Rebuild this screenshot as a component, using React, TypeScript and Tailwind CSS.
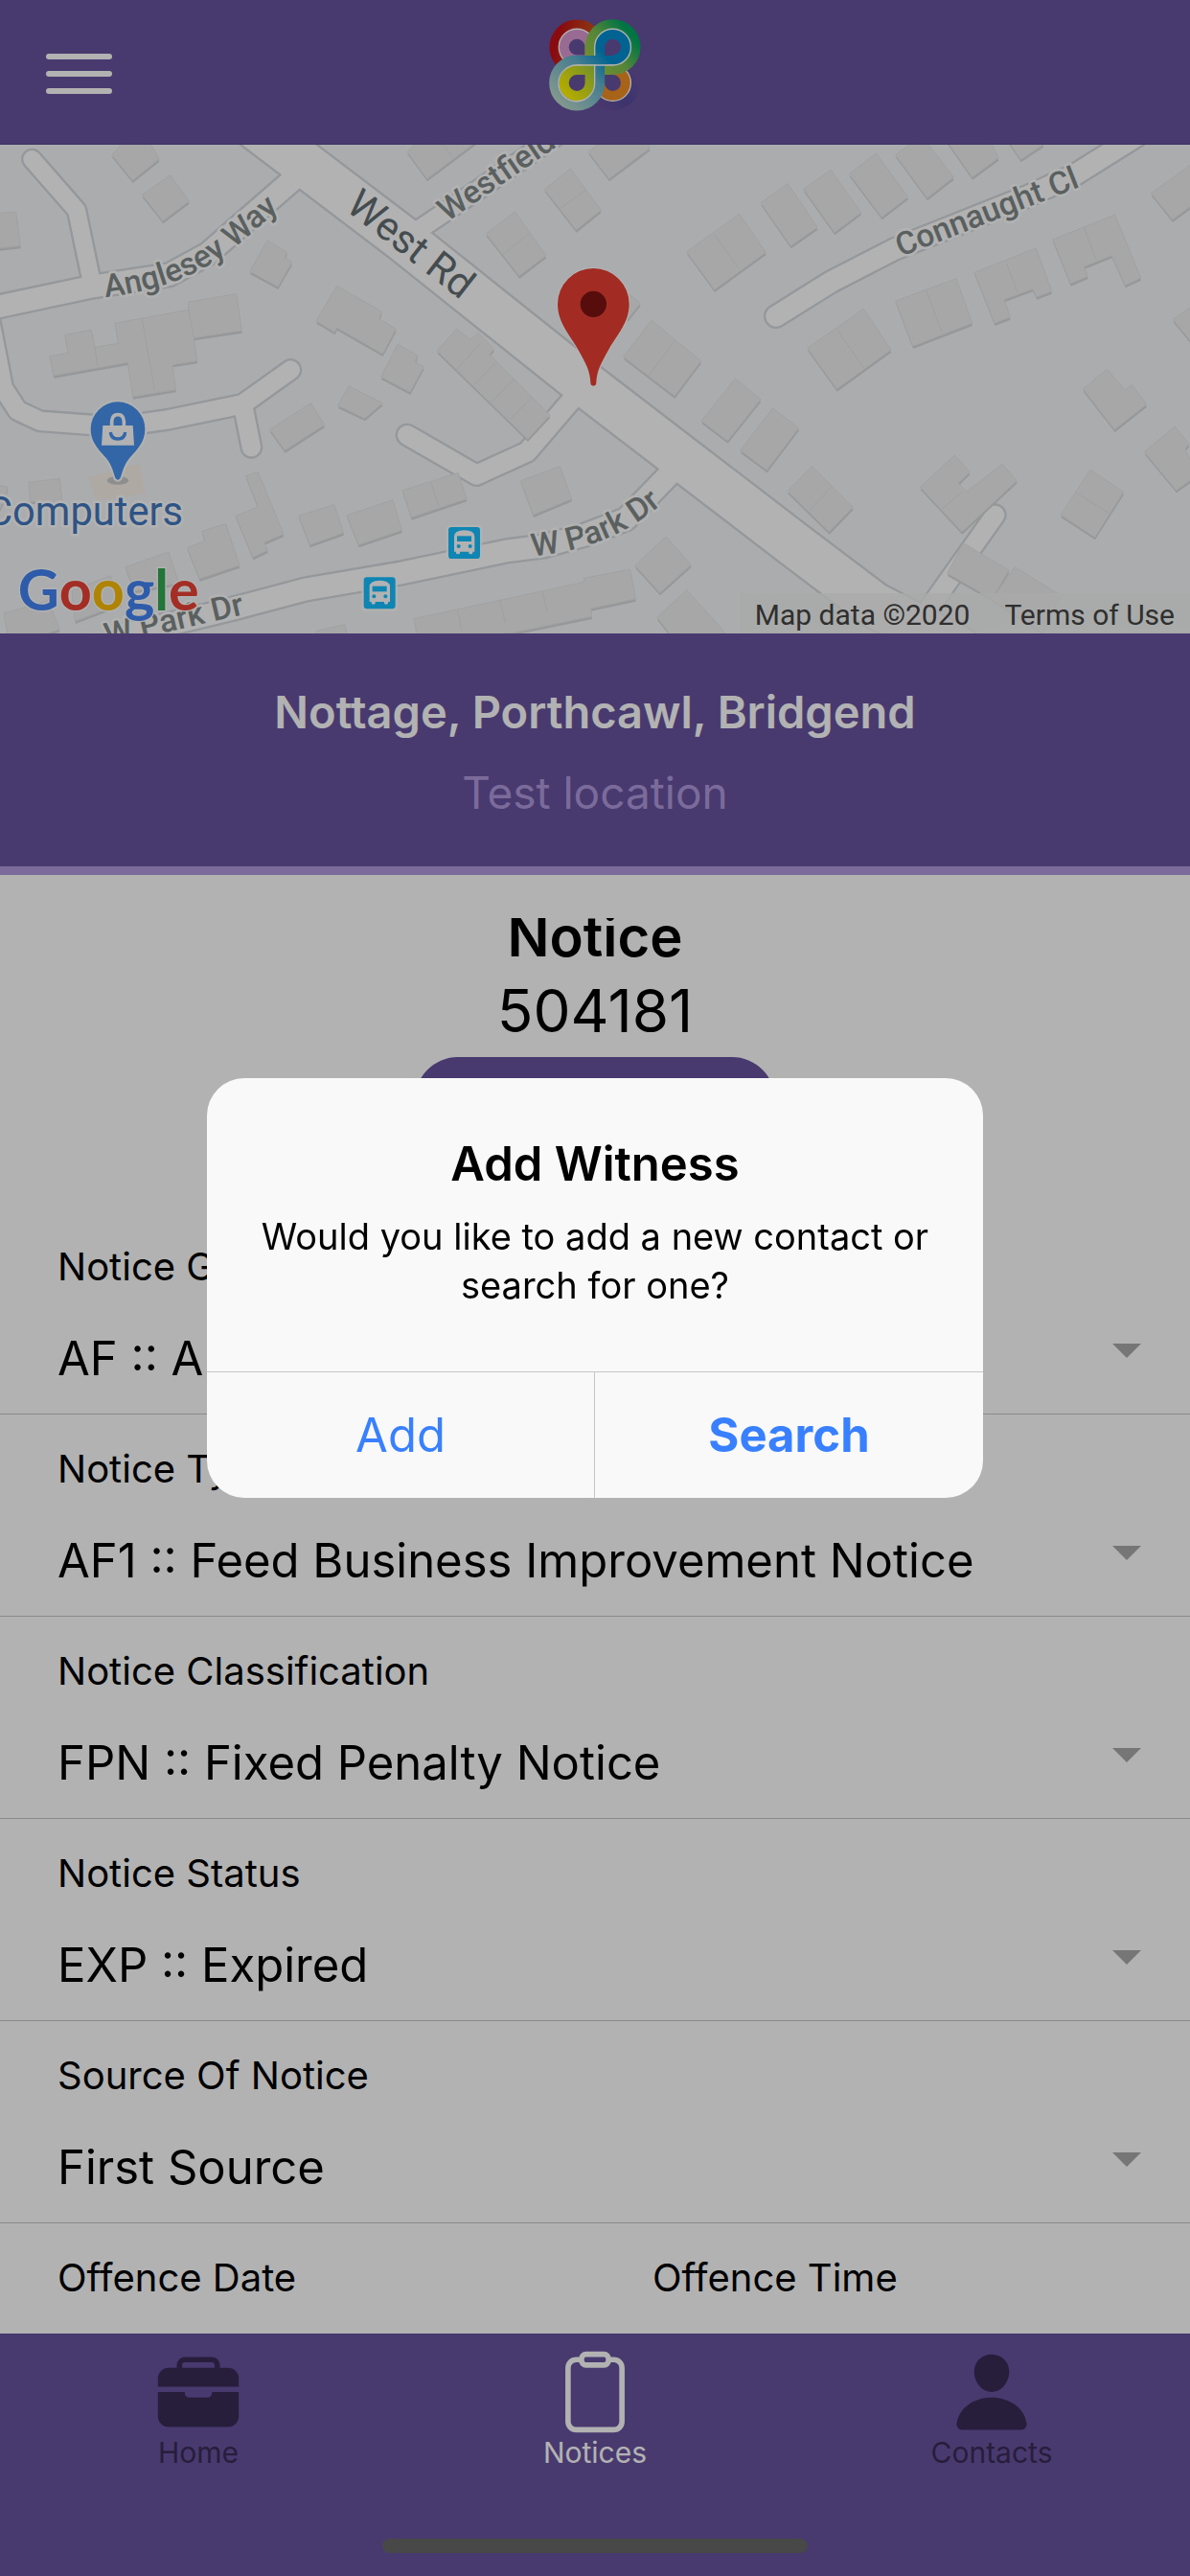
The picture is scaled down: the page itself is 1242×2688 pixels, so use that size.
import { useId } from 'react';
import { IoBriefcase, IoClipboardOutline, IoPerson } from 'react-icons/io5';

const fields = [
  { label: 'Notice Group', value: 'AF :: Animal Feed' },
  { label: 'Notice Type', value: 'AF1 :: Feed Business Improvement Notice' },
  { label: 'Notice Classification', value: 'FPN :: Fixed Penalty Notice' },
  { label: 'Notice Status', value: 'EXP :: Expired' },
  { label: 'Source Of Notice', value: 'First Source' },
];

// width is the road's outer width, the casing takes 7 units on each side
const roads = [
  { d: 'M-20 513 L290 447 L530 410 L650 345 L960 75', width: 82 },
  { d: 'M100 48 L240 208 L290 447', width: 68 },
  { d: 'M-38 520 L10 765 L55 835 L125 868 L365 886 L523 864 L760 815 L910 708', width: 72 },
  { d: 'M760 815 L787 950', width: 72 },
  { d: 'M1280 290 L1500 142 L1750 -30', width: 70 },
  { d: 'M1275 912 L1492 1037 L1650 965 L1830 755', width: 74 },
  { d: 'M380 1540 L720 1458 L957 1395 L1250 1345 L1590 1274 L1700 1260 L1830 1225 L1960 1175 L2130 1000', width: 82 },
  { d: 'M2430 540 L2601 433 L2801 330 L3216 165 L3366 97 L3560 -25', width: 78 },
  { d: 'M3116 1162 L2926 1430 L2850 1540', width: 72 },
  { d: 'M790 -60 L1260 297 L1812 737 L2490 1257 L2736 1443 L3000 1580', width: 152 },
];

const westBuildings = [
  '350,35 400,-20 460,-20 498,48 415,115',
  '445,160 533,98 592,180 510,242',
  '-10,218 50,213 64,320 -10,328',
  '838,302 898,340 893,355 914,372 870,448 782,400',
  '1055,445 1195,525 1188,548 1240,580 1198,658 1055,576 1048,590 990,555',
  '1245,628 1307,662 1300,683 1327,698 1284,778 1193,730',
  '1092,758 1198,812 1142,860 1058,820',
  '845,895 973,812 1016,880 892,960',
  '203,598 286,583 297,637 370,625 360,562 590,520 590,495 740,470 757,585 607,608 617,680 540,692 550,770 416,792 400,685 168,726 156,665 213,655',
  '-10,1068 24,1075 16,1110 -10,1160',
  '90,1060 187,1048 195,1120 95,1120',
  '770,1040 808,1027 888,1222 828,1248 838,1273 792,1295 738,1165 808,1137',
  '632,1213 707,1190 750,1320 625,1362 586,1265 642,1243',
  '935,1165 1046,1130 1076,1218 970,1256',
  '1086,1163 1230,1115 1258,1210 1123,1256',
  '393,1325 528,1278 560,1375 420,1400',
  '225,1400 345,1352 380,1440 235,1495',
  '12,1470 150,1430 187,1520 30,1570',
  '990,1525 1080,1505 1090,1560 995,1560',
];

const centreBuildings = [
  '45,25 100,-30 280,-20 107,110',
  '612,25 690,-30 800,-10 803,15 677,110',
  '475,143 556,78 652,208 574,270',
  '292,282 382,213 480,350 396,414',
  '920,338 1085,220 1168,340 1007,457',
  '1152,185 1237,125 1329,262 1246,320',
  '720,455 775,500 735,550',
  '810,553 965,680 882,790 722,667',
  '1072,735 1152,800 1048,930 966,868',
  '1190,828 1271,890 1171,1022 1088,960',
  '1236,1088 1312,1010 1441,1138 1366,1215',
  '138,648 200,580 243,613 268,593 316,642 303,660 492,850 422,925',
  '30,1085 205,1030 231,1112 58,1170',
  '400,1055 523,1010 560,1112 440,1162',
  '66,1487 600,1372 598,1360 743,1332 760,1425 620,1455 623,1480 380,1530 80,1560',
  '758,1320 855,1230 934,1318 836,1406',
  '827,1483 920,1397 1040,1530 1000,1600 920,1600',
];

const eastBuildings = [
  '50,142 135,82 230,215 147,278',
  '193,95 277,30 377,167 295,230',
  '338,35 420,-25 520,105 437,170',
  '490,-20 630,-20 660,45 578,105',
  '690,-10 800,-20 800,3 730,50',
  '62,640 238,517 324,645 154,768',
  '338,492 528,422 578,562 392,634',
  '585,403 778,327 827,462 780,480 767,455 678,488 697,543 648,562',
  '830,300 1025,222 1106,420 1057,443 1015,350 928,385 940,415 886,438',
  '1138,155 1270,60 1270,190 1205,238',
  '1206,550 1280,500 1280,640',
  '925,768 1000,706 1055,770 1078,755 1124,816 1024,895',
  '1117,965 1212,885 1257,940 1245,955 1280,1040 1217,1085',
  '948,1020 1052,1090 962,1232 855,1162',
  '415,1075 523,975 570,1028 535,1063 560,1090 672,1003 718,1055 546,1215',
  '550,1250 693,1335 640,1425 500,1345',
  '712,1325 852,1412 800,1530 640,1425',
];

// party walls between semi-detached houses
const walls =
  'M445 550 L485 775 M297 637 L305 695 M590 520 L607 608 M1380 -10 L1415 40 M1752 205 L1835 143 M1575 345 L1658 282 M2237 285 L2313 390 M2113 617 L2032 725 M1430 705 L1505 625 M1484 755 L1550 688 M1540 808 L1608 738 M1595 865 L1664 795 M1350 1060 L1372 1132 M1432 1460 L1446 1525 M1566 1430 L1582 1500 M1698 1402 L1714 1465 M2620 580 L2704 702 M2900 460 L2948 588 M3152 375 L3186 465 M3394 262 L3433 365 M2534 1146 L2604 1075 M2948 1145 L3012 1090 M3368 1092 L3472 1156';

function Buildings({ points }: { points: string[] }) {
  return (
    <>
      <g fill="#d6d9db" transform="translate(1 8)">
        {points.map((p) => (
          <polygon key={p} points={p} />
        ))}
      </g>
      <g fill="#f0f0f0" stroke="#e6e7e8" strokeWidth="3">
        {points.map((p) => (
          <polygon key={p} points={p} />
        ))}
      </g>
    </>
  );
}

function BusStop({ x, y }: { x: number; y: number }) {
  return (
    <g transform={`translate(${x} ${y})`}>
      <rect x="-7" y="-7" width="113" height="113" rx="12" fill="#fff" opacity="0.8" />
      <rect width="99" height="99" rx="10" fill="#15bfff" />
      <path
        d="M18 30 Q18 10 50 10 Q82 10 82 30 V77 H76 V81 Q76 85 70 85 Q64 85 64 81 V77 H36 V81 Q36 85 30 85 Q24 85 24 81 V77 H18 Z"
        fill="#fff"
      />
      <rect x="27" y="28" width="45" height="17" fill="#15bfff" />
      <circle cx="32" cy="60" r="6" fill="#15bfff" />
      <circle cx="68" cy="60" r="6" fill="#15bfff" />
    </g>
  );
}

function MapDrawing() {
  return (
    <svg
      viewBox="0 3 3726 1530"
      preserveAspectRatio="xMidYMid slice"
      className="block h-full w-full font-[Roboto,sans-serif]"
      role="img"
      aria-label="Map"
    >
      <defs>
        <path id="anglesey" d="M330 480 C520 458 640 405 765 300 L960 130" />
        <path id="westfield" d="M1400 245 L1800 -30" />
        <path id="westrd" d="M1078 205 L1520 550" />
        <path id="connaught" d="M2820 354 L3440 112" />
        <path id="park" d="M1668 1292 C1830 1272 1960 1237 2130 1078" />
        <path id="park-west" d="M335 1572 L820 1460" />
      </defs>
      <rect y="-20" width="3726" height="1600" fill="#f5f7fa" />

      <g fill="none" strokeLinecap="round" strokeLinejoin="round">
        {roads.map((r) => (
          <path key={r.d} d={r.d} stroke="#d5dadf" strokeWidth={r.width} />
        ))}
        {roads.map((r) => (
          <path key={r.d} d={r.d} stroke="#fff" strokeWidth={r.width - 14} />
        ))}
      </g>

      <Buildings points={westBuildings} />
      <g transform="translate(1230 0)">
        <Buildings points={centreBuildings} />
      </g>
      <g transform="translate(2466 0)">
        <Buildings points={eastBuildings} />
      </g>
      <polygon points="277,1043 435,1003 456,1095 300,1118" fill="#faf2ea" />
      <path d={walls} fill="none" stroke="#e3e4e5" strokeWidth="3" />

      <g fontWeight="500" fontSize="100" fill="#828989" stroke="#fff" strokeWidth="16" strokeLinejoin="round" paintOrder="stroke">
        <text><textPath href="#anglesey">Anglesey Way</textPath></text>
        <text><textPath href="#westfield">Westfield</textPath></text>
        <text><textPath href="#connaught">Connaught Cl</textPath></text>
        <text><textPath href="#park">W Park Dr</textPath></text>
        <text><textPath href="#park-west">W Park Dr</textPath></text>
      </g>
      <text fontSize="126" fill="#636e72" stroke="#fff" strokeWidth="10" paintOrder="stroke">
        <textPath href="#westrd">West Rd</textPath>
      </text>

      <BusStop x={1404} y={1200} />
      <BusStop x={1139} y={1357} />

      {/* Shop pin */}
      <ellipse cx="369" cy="1054" rx="34" ry="13" fill="#ccc" />
      <path
        d="M284 893 A85 85 0 0 1 454 893 C454 935 430 955 405 985 C385 1010 384 1030 376 1048 Q369 1056 362 1048 C354 1030 353 1010 333 985 C308 955 284 935 284 893 Z"
        fill="#4993f0"
        stroke="#fff"
        strokeWidth="12"
        paintOrder="stroke"
      />
      <path d="M322 882 H416 L420 944 H318 Z" fill="#fff" />
      <path d="M350 884 V868 Q352 848 369 848 Q386 848 388 868 V884" fill="none" stroke="#fff" strokeWidth="11" />
      <path d="M346 903 Q348 924 369 924 Q390 924 392 903" fill="none" stroke="#4993f0" strokeWidth="10" />
      <text x="-42" y="1193" fontSize="125" fill="#4378bf" stroke="#fff" strokeWidth="16" strokeLinejoin="round" paintOrder="stroke">
        Computers
      </text>

      {/* Google */}
      <text x="56" y="1462" fontSize="178" fontWeight="700" className="font-[Lato,sans-serif]" stroke="#fff" strokeWidth="8" paintOrder="stroke">
        <tspan fill="#4285f4">G</tspan>
        <tspan fill="#ea4335">o</tspan>
        <tspan fill="#fbbc05">o</tspan>
        <tspan fill="#4285f4">g</tspan>
        <tspan fill="#34a853">l</tspan>
        <tspan fill="#ea4335">e</tspan>
      </text>

      {/* Notice location */}
      <path
        d="M1746 502 A112 112 0 0 1 1970 502 C1970 560 1932 598 1906 644 C1882 686 1868 712 1867 748 Q1867 758 1858 758 Q1849 758 1849 748 C1848 712 1834 686 1810 644 C1784 598 1746 560 1746 502 Z"
        fill="#e94034"
        stroke="#fff"
        strokeWidth="6"
        paintOrder="stroke"
      />
      <circle cx="1858" cy="502" r="41" fill="#7c1311" />
    </svg>
  );
}

function Logo() {
  return (
    <svg viewBox="67 59 290 290" className="h-24 w-24" role="img" aria-label="Logo">
      <defs>
        <linearGradient id="teal" gradientUnits="userSpaceOnUse" x1="95" y1="330" x2="275" y2="150">
          <stop offset="0" stopColor="#bfdccb" />
          <stop offset="0.55" stopColor="#64b4cf" />
          <stop offset="0.85" stopColor="#008fd0" />
        </linearGradient>
        <linearGradient id="green" gradientUnits="userSpaceOnUse" x1="120" y1="290" x2="330" y2="110">
          <stop offset="0" stopColor="#fff500" />
          <stop offset="0.5" stopColor="#98c94a" />
          <stop offset="0.7" stopColor="#7cc052" />
          <stop offset="1" stopColor="#00a862" />
        </linearGradient>
        <linearGradient id="red" gradientUnits="userSpaceOnUse" x1="90" y1="120" x2="200" y2="150">
          <stop offset="0" stopColor="#c40f16" />
          <stop offset="1" stopColor="#c8541c" />
        </linearGradient>
        <linearGradient id="violet" gradientUnits="userSpaceOnUse" x1="220" y1="330" x2="340" y2="230">
          <stop offset="0" stopColor="#6a509e" />
          <stop offset="0.5" stopColor="#584b9d" />
          <stop offset="1" stopColor="#6753a0" />
        </linearGradient>
      </defs>
      <g fill="none" strokeWidth="31">
        <circle cx="155" cy="147" r="71" stroke="url(#red)" />
        <path d="M196 147 A41 41 0 1 0 155 188 H196 Z" stroke="#dd9ad2" />
        <circle cx="155" cy="147" r="57" stroke="#fff" strokeWidth="4" />
        <circle cx="268" cy="260" r="71" stroke="url(#violet)" />
        <path d="M227 260 A41 41 0 1 0 268 219 H227 Z" stroke="#f08f22" />
        <circle cx="268" cy="260" r="57" stroke="#fff" strokeWidth="4" />
        <path d="M155 219 H268 A72 72 0 1 0 196 147 V260 A41 41 0 1 1 155 219" stroke="url(#green)" />
        <path d="M268 188 A41 41 0 1 0 227 147 V260 A72 72 0 1 1 155 188" stroke="url(#teal)" />
        <path d="M268 204 A57 57 0 1 0 211 147 V260 A57 57 0 1 1 155 204" stroke="#fff" strokeWidth="4" />
        {/* the crossing band lies over the vertical line */}
        <path d="M154 174 H269 V202 H154 Z" fill="url(#teal)" strokeWidth="0" />
        <path d="M154 204 H269" stroke="#fff" strokeWidth="4" />
      </g>
    </svg>
  );
}

function SelectField({ label, value }: { label: string; value: string }) {
  const id = useId();
  return (
    <div className="border-b border-[#c8c8c8] pt-[33px] pb-[25px]">
      <label htmlFor={id} className="block px-[60px] text-[40px] leading-[48px]">
        {label}
      </label>
      <div className="relative mt-10">
        <select id={id} className="block h-16 w-full appearance-none bg-transparent pr-28 pl-[60px] text-[49px] leading-[64px]">
          <option>{value}</option>
        </select>
        <svg viewBox="0 0 30 15" className="pointer-events-none absolute top-4 right-[51px] w-[30px]">
          <path d="M0 0H30L15 15Z" fill="#aaa" />
        </svg>
      </div>
    </div>
  );
}

function TextField({ label }: { label: string }) {
  const id = useId();
  return (
    <div className="px-[60px] pt-[33px] pb-[25px]">
      <label htmlFor={id} className="block text-[40px] leading-[48px]">
        {label}
      </label>
      <input id={id} className="mt-10 block h-16 w-full text-[49px]" />
    </div>
  );
}

export default function App() {
  return (
    <div className="flex h-screen flex-col overflow-hidden bg-white font-[Inter,sans-serif] text-black">
      {/* Header */}
      <header className="grid h-[151px] shrink-0 grid-cols-3 border-b border-[#5a4790] bg-[#6753a0] px-12">
        <button aria-label="Menu" className="flex w-[69px] flex-col justify-center gap-3 pt-1">
          <span className="h-[6px] w-full rounded-full bg-white" />
          <span className="h-[6px] w-full rounded-full bg-white" />
          <span className="h-[6px] w-full rounded-full bg-white" />
        </button>
        <div className="flex justify-center pt-5">
          <Logo />
        </div>
      </header>

      {/* Map */}
      <section className="relative h-[510px] shrink-0">
        <MapDrawing />
        <div className="absolute right-0 bottom-0 flex gap-9 bg-[#f3f4f3]/80 pt-1 pr-4 pl-4 font-[Roboto,sans-serif] text-[30px] leading-[38px] text-[#444]">
          <span>Map data ©2020</span>
          <a href="#terms">Terms of Use</a>
        </div>
      </section>

      <section className="shrink-0 border-b-[9px] border-[#b19adf] bg-[#6753a0] pt-10 pb-[35px] text-center leading-[84px]">
        <h1 className="text-[47px]/[84px] font-semibold text-white">Nottage, Porthcawl, Bridgend</h1>
        <p className="text-[46px]/[84px] text-[#b19adf]">Test location</p>
      </section>

      {/* Notice form */}
      <main className="min-h-0 flex-1 pt-[45px]">
        <div className="h-full overflow-hidden">
          <div className="-mt-5 text-center">
            <h2 className="text-[58px]/[78px] font-semibold">Notice</h2>
            <p className="text-[62px]/[78px]">504181</p>
          </div>
          <button aria-label="Notice actions" className="mx-auto mt-[9px] mb-[50px] block h-28 w-[376px] rounded-[45px] bg-[#6753a0]" />
          {fields.map((f) => (
            <SelectField key={f.label} label={f.label} value={f.value} />
          ))}
          <div className="grid grid-cols-2">
            <TextField label="Offence Date" />
            <TextField label="Offence Time" />
          </div>
        </div>
      </main>

      {/* Tabs */}
      <footer className="shrink-0 bg-[#6753a0] pt-4 pb-6">
        <nav className="grid grid-cols-3 text-[30px] leading-[36px] text-[#392b57]">
          <a href="#home" className="flex flex-col items-center">
            <IoBriefcase size={90} />
            Home
          </a>
          <a href="#notices" className="flex flex-col items-center text-white">
            <IoClipboardOutline size={90} />
            Notices
          </a>
          <a href="#contacts" className="flex flex-col items-center">
            <IoPerson size={90} />
            Contacts
          </a>
        </nav>
        <div className="mx-auto mt-[72px] h-[15px] w-[444px] rounded-full bg-[#686868]" />
      </footer>

      {/* Add witness alert */}
      <div className="fixed inset-0 flex items-center justify-center bg-black/30">
        <div role="alertdialog" aria-labelledby="alert-title" aria-describedby="alert-text" className="w-[810px] overflow-hidden rounded-[39px] bg-[#f9f9f9] text-center">
          <div className="px-12 pt-[58px] pb-16">
            <h2 id="alert-title" className="text-[49px] leading-[64px] font-semibold">
              Add Witness
            </h2>
            <p id="alert-text" className="mt-[18px] text-[38px] leading-[51px]">
              Would you like to add a new contact or search for one?
            </p>
          </div>
          <div className="grid grid-cols-2 divide-x divide-[#c6c6c6] border-t border-[#c6c6c6] text-[49px] text-[#3880ff]">
            <button className="h-[131px]">Add</button>
            <button className="h-[131px] font-bold">Search</button>
          </div>
        </div>
      </div>
    </div>
  );
}
